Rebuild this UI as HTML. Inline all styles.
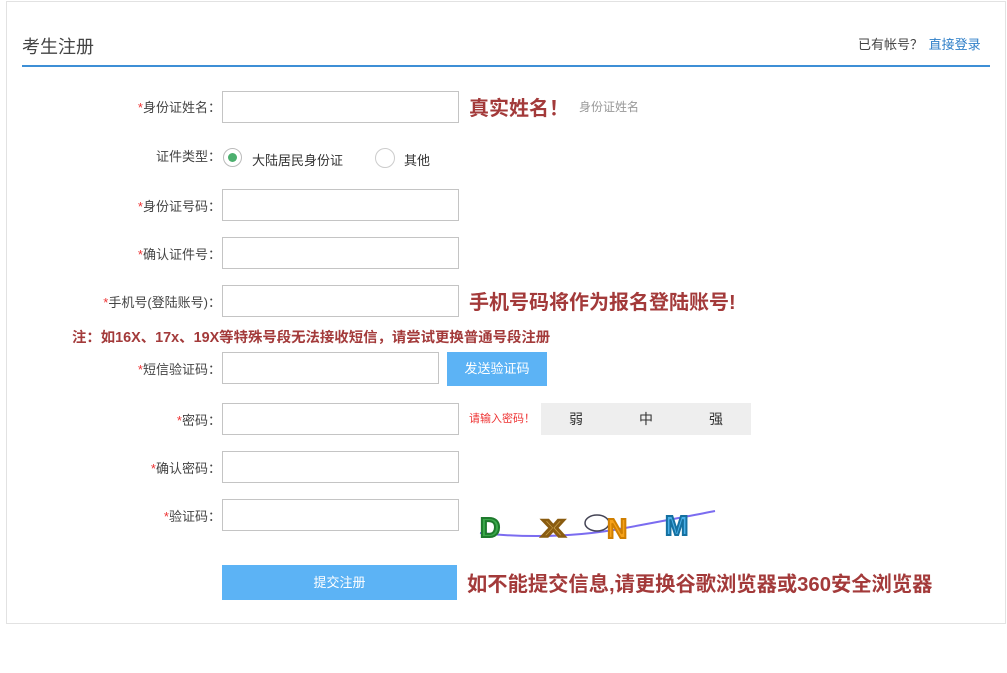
<!DOCTYPE html>
<html><head><meta charset="utf-8"><style>
body{margin:0;width:1007px;height:673px;background:#fff;font-family:"Liberation Sans","Noto Sans CJK SC",sans-serif;position:relative;overflow:hidden;color:#333}
.a{position:absolute;white-space:nowrap}
.box{position:absolute;left:6px;top:1px;width:998px;height:621px;border:1px solid #e2e2e2}
.lbl{position:absolute;right:786px;font-size:13px;color:#444}
.lbl i{color:#e33;font-style:normal}
.in{position:absolute;left:222px;width:235px;height:30px;border:1px solid #c4c4c4;background:#fff}
.red{position:absolute;color:#a33a3a;font-weight:bold;white-space:nowrap}
</style></head><body>
<div class="box"></div>
<div class="a" style="left:22px;top:33px;font-size:18px;color:#444">考生注册</div>
<div class="a" style="left:858px;top:34px;font-size:13px;color:#444">已有帐号？ <span style="color:#2f7fc8;margin-left:2px">直接登录</span></div>
<div class="a" style="left:22px;top:65px;width:968px;height:2px;background:#3d8fd6"></div>

<div class="lbl" style="top:97px"><i>*</i>身份证姓名：</div>
<div class="in" style="top:91px"></div>
<div class="red" style="left:469px;top:92px;font-size:20px">真实姓名！</div>
<div class="a" style="left:579px;top:98px;font-size:12px;color:#999">身份证姓名</div>

<div class="lbl" style="top:146px">证件类型：</div>
<div class="a" style="left:223px;top:148px;width:17px;height:17px;border:1px solid #bbb;border-radius:50%"></div>
<div class="a" style="left:228px;top:153px;width:9px;height:9px;background:#4caf6e;border-radius:50%"></div>
<div class="a" style="left:252px;top:150px;font-size:13px">大陆居民身份证</div>
<div class="a" style="left:375px;top:148px;width:18px;height:18px;border:1px solid #ccc;border-radius:50%"></div>
<div class="a" style="left:404px;top:150px;font-size:13px">其他</div>

<div class="lbl" style="top:196px"><i>*</i>身份证号码：</div>
<div class="in" style="top:189px"></div>
<div class="lbl" style="top:244px"><i>*</i>确认证件号：</div>
<div class="in" style="top:237px"></div>
<div class="lbl" style="top:292px"><i>*</i>手机号(登陆账号)：</div>
<div class="in" style="top:285px"></div>
<div class="red" style="left:469px;top:286px;font-size:20px">手机号码将作为报名登陆账号!</div>
<div class="red" style="left:72px;top:326px;font-size:14.4px">注：如16X、17x、19X等特殊号段无法接收短信，请尝试更换普通号段注册</div>

<div class="lbl" style="top:359px"><i>*</i>短信验证码：</div>
<div class="in" style="top:352px;width:215px"></div>
<div class="a" style="left:447px;top:352px;width:100px;height:34px;background:#5cb3f5;color:#fff;font-size:13px;text-align:center;line-height:34px">发送验证码</div>

<div class="lbl" style="top:410px"><i>*</i>密码：</div>
<div class="in" style="top:403px"></div>
<div class="a" style="left:469px;top:410px;font-size:11px;color:#e33">请输入密码！</div>
<div class="a" style="left:541px;top:403px;width:210px;height:32px;background:#eee;font-size:14px;line-height:32px">
<span class="a" style="left:28px">弱</span><span class="a" style="left:98px">中</span><span class="a" style="left:168px">强</span></div>

<div class="lbl" style="top:458px"><i>*</i>确认密码：</div>
<div class="in" style="top:451px"></div>
<div class="lbl" style="top:506px"><i>*</i>验证码：</div>
<div class="in" style="top:499px"></div>
<svg class="a" style="left:475px;top:506px" width="250" height="40">
<path d="M5 27 Q80 35 150 22 T240 5" stroke="#7b6cf0" stroke-width="2" fill="none"/>
<text x="5" y="31" font-family="Liberation Sans" font-weight="bold" font-size="28" fill="#3aa84a" stroke="#1e7a2d" stroke-width="2">D</text>
<text x="68" y="30" font-family="Liberation Sans" font-weight="bold" font-size="30" fill="#c9a04a" stroke="#8a5c10" stroke-width="3" transform="scale(1.15,0.8) translate(-10,8)">X</text>
<ellipse cx="122" cy="17" rx="12" ry="8" fill="none" stroke="#445" stroke-width="1.5"/>
<text x="132" y="32" font-family="Liberation Sans" font-weight="bold" font-size="28" fill="#f6a21a" stroke="#d07f00" stroke-width="2">N</text>
<text x="190" y="29" font-family="Liberation Sans" font-weight="bold" font-size="28" fill="#4ab0e8" stroke="#1470a0" stroke-width="2">M</text>
</svg>

<div class="a" style="left:222px;top:565px;width:235px;height:35px;background:#5cb3f5;color:#fff;font-size:13px;text-align:center;line-height:35px">提交注册</div>
<div class="red" style="left:467px;top:567px;font-size:20.3px">如不能提交信息,请更换谷歌浏览器或360安全浏览器</div>
</body></html>
